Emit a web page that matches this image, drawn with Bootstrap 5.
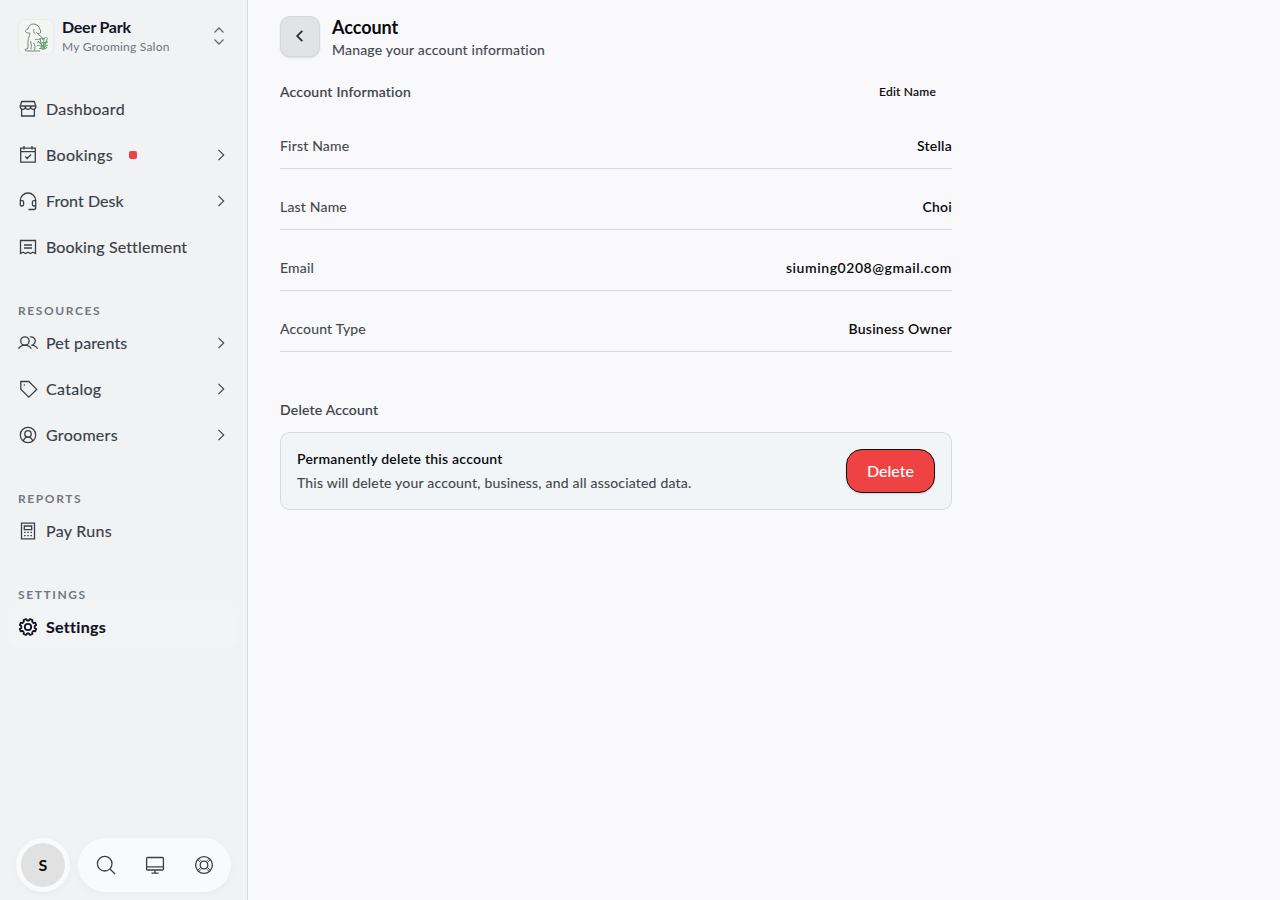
<!DOCTYPE html>
<html lang="en">
<head>
<meta charset="utf-8">
<meta name="viewport" content="width=device-width, initial-scale=1">
<title>Account</title>
<link href="https://cdn.jsdelivr.net/npm/bootstrap@5.3.0/dist/css/bootstrap.min.css" rel="stylesheet">
<style>
  body { font-family: Lato, "Open Sans", sans-serif; font-size: 14px; line-height: 20px; background: #f9f9fc; color: #090a0c; letter-spacing: .18px; }
  svg { fill: none; stroke: currentColor; stroke-width: 1.3; flex: none; display: block; }
  .sidebar { width: 248px; background: #f0f2f4; border-right: 1px solid #d6d8dc; padding: 16px 8px 8px; }
  .salon { padding: 0 10px; height: 41px; }
  .salon-logo { width: 36px; height: 36px; border-radius: 6px; background: #f3f6f3; border: 1px solid #e9ecea; color: #71877a; }
  .salon-logo svg { stroke-width: 1; }
  .salon-text { margin-top: -3px; }
  .salon-name { font-size: 16px; font-weight: 700; color: #10152a; letter-spacing: -.25px; line-height: 22px; }
  .salon-kind { font-size: 12px; color: #70757e; line-height: 16px; margin-top: 1px; letter-spacing: .22px; }
  .switcher { color: #666b73; margin-top: -2px; }
  .menu { margin-top: 32px; gap: 6px; }
  .menu-link { height: 40px; padding: 0 9px 0 10px; gap: 8px; font-size: 16px; line-height: 24px; color: #3a3f47; text-decoration: none; letter-spacing: .3px; border-radius: 8px; -webkit-text-stroke: .15px; }
  .menu-link.current { background: #f2f4f6; color: #10131f; font-weight: 700; letter-spacing: .3px; }
  .menu-link.current svg { stroke-width: 1.8; }
  .chevron { stroke-width: 1.1; margin-right: 1px; }
  .menu-title { height: 16px; line-height: 17px; margin: 29px 10px -1px; font-size: 12px; font-weight: 700; letter-spacing: 1.6px; color: #737881; }
  .ls-narrow { letter-spacing: .05px; }
  .ls-mid { letter-spacing: .15px; }
  .alert-dot { width: 8px; height: 8px; border-radius: 2px; background: #eb4448; margin-left: 8px; }
  .dock { gap: 8px; padding: 0 8px; }
  .avatar-ring { width: 54px; height: 54px; background: #f9fafb; box-shadow: 0 2px 8px rgba(0,0,0,.035); }
  .avatar-face { width: 44px; height: 44px; background: #e1e1e2; font-size: 16px; font-weight: 700; color: #08090b; }
  .dock-tools { width: 153px; height: 54px; padding: 0 16px 0 17px; background: #f9fafc; color: #3a3f47; box-shadow: 0 2px 8px rgba(0,0,0,.035); }
  .page { padding: 16px 32px; }
  .page-body { width: 672px; }
  .page-head { height: 60px; }
  .back { width: 40px; height: 41px; padding: 0 0 2px; border-radius: 10px; border: 1px solid #d5d8db; background: #e1e4e7; box-shadow: 0 1px 2px rgba(0,0,0,.12); }
  .page-title { font-size: 18px; line-height: 22px; font-weight: 700; letter-spacing: -.05px; margin: 0 0 2px; }
  .soft { color: #42464d; -webkit-text-stroke: .12px; letter-spacing: .2px; }
  .heading { font-size: 14px; line-height: 20px; font-weight: 500; color: #3f434a; letter-spacing: .22px; margin: 0; -webkit-text-stroke: .15px; }
  .edit { height: 32px; padding: 0 16px; border: 0; font-size: 12px; font-weight: 500; letter-spacing: .22px; color: #090a0c; -webkit-text-stroke: .15px; }
  .field { padding: 28px 0 12px; border-bottom: 1px solid #d8d9dc; }
  .field dd, .field dt { margin: 0; }
  .field dt { font-weight: 400; }
  .field dd, .strong { font-weight: 600; letter-spacing: .23px; }
  .field .mail { letter-spacing: .56px; }
  .danger-box { margin-top: 12px; height: 78px; padding: 0 16px; border: 1px solid #d7dadd; border-radius: 10px; background: #f2f5f7; }
  .delete { width: 89px; height: 44px; padding: 0; border: 1px solid #101112; border-radius: 16px; background: #ef4343; color: #fff; font-size: 16px; font-weight: 500; box-shadow: 0 1px 2px rgba(0,0,0,.15); }
  .delete:hover { background: #e23a3a; color: #fff; }
</style>
</head>
<body>
<div class="d-flex vh-100 overflow-hidden">
  <aside class="sidebar d-flex flex-column flex-shrink-0">
    <div class="salon d-flex align-items-center">
      <div class="salon-logo d-flex align-items-center justify-content-center">
        <svg width="28" height="30" viewBox="0 0 28 30">
          <path d="M3.500 9.500c-.3-1.500 1-2 2.500-2.500C6.500 3.500 9 2 11.500 2c3.500 0 5.800 2.500 6.200 5 .8 1.500 1.600 2.500.6 4-1 1.300-3.300.8-4.300-.8M3.500 9.500c.8 1.500 2.500 1.700 4.300 1.500.3 2.500-1.500 4.500-1.800 7.500-.2 3.500.5 5.500-.5 8.500H3.500c-1.200 1.500.5 2 2.500 2h12M12 7c-1 2 0 4 1.500 5M16 12.500c3 1.500 4.500 3 5 5.500M8.500 19c1 3 .8 5.500.5 8.500M11.500 21c1.500 2 2 4.500 1 7"/>
          <path stroke="#5f9a71" d="M13 18c2-2 3 1 5-1s3 1 5-1 2 1 3 1M15 21c2-2 3 1 5 0s3 0 6-1M15 24c2-2 3 1 5 0s3 1 6-1M17 27c2-2 3 1 5 0s2 0 3-2M18 16l2 11M22 16l-1 12M25 17l-3 10M16 19l8 8M25 19l-7 8"/>
        </svg>
      </div>
      <div class="salon-text ms-2 me-auto">
        <div class="salon-name">Deer Park</div>
        <div class="salon-kind">My Grooming Salon</div>
      </div>
      <svg class="switcher" width="20" height="20" viewBox="0 0 20 20"><path d="M5.500 6.500 10 2l4.500 4.500M5.500 13.500 10 18l4.500-4.500"/></svg>
    </div>

    <nav class="menu d-flex flex-column">
      <a class="menu-link d-flex align-items-center" href="#">
        <svg width="20" height="20" viewBox="0 0 20 20"><path d="M3.700 2.500h12.600l1.500 4.500v.8a2.600 2.500 0 0 1-5.200 0 2.600 2.500 0 0 1-5.200 0 2.600 2.500 0 0 1-5.200 0V7zM2.200 7h15.600M3.600 10.200v6.800h12.800v-6.800"/></svg>
        <span>Dashboard</span></a>
      <a class="menu-link d-flex align-items-center" href="#">
        <svg width="20" height="20" viewBox="0 0 20 20"><path d="M2.700 3.200h14.600v14H2.700zM2.700 6.700h14.600M6 1v3.500M14 1v3.500M7.200 11.500l2 2 3.800-4"/></svg>
        <span>Bookings</span><i class="alert-dot"></i>
        <svg class="chevron ms-auto" width="16" height="16" viewBox="0 0 16 16"><path d="m5.500 2.800 5.200 5.200-5.200 5.200"/></svg></a>
      <a class="menu-link d-flex align-items-center" href="#">
        <svg width="20" height="20" viewBox="0 0 20 20"><path d="M2.300 14V9.500a7.700 7.500 0 0 1 15.400 0v7a2 2 0 0 1-2 2H10.500M2.300 9.700h1.900a1.400 1.400 0 0 1 1.400 1.400v2.500A1.400 1.400 0 0 1 4.200 15H3.300a1 1 0 0 1-1-1M17.700 9.700h-1.900a1.400 1.400 0 0 0-1.400 1.400v2.500a1.400 1.400 0 0 0 1.400 1.400h1.900"/></svg>
        <span class="ls-narrow">Front Desk</span>
        <svg class="chevron ms-auto" width="16" height="16" viewBox="0 0 16 16"><path d="m5.500 2.800 5.200 5.200-5.200 5.200"/></svg></a>
      <a class="menu-link d-flex align-items-center" href="#">
        <svg width="20" height="20" viewBox="0 0 20 20"><path d="M2.500 3.500h15v13l-2.500-1.300-2.500 1.300-2.500-1.300-2.500 1.300L5 15.200l-2.500 1.300zM6 8h8M6 11h8"/></svg>
        <span class="ls-mid">Booking Settlement</span></a>

      <div class="menu-title">RESOURCES</div>
      <a class="menu-link d-flex align-items-center" href="#">
        <svg width="20" height="20" viewBox="0 0 20 20"><circle cx="6.900" cy="8" r="4.200"/><path d="M.5 15.700c1.500-2.300 3.700-3.500 6.400-3.500s4.900 1.200 6.400 3.500M11.800 4a4.200 4.200 0 1 1 1.500 8.200c2.700 0 4.800 1.200 6.300 3.500"/></svg>
        <span class="ls-mid">Pet parents</span>
        <svg class="chevron ms-auto" width="16" height="16" viewBox="0 0 16 16"><path d="m5.500 2.800 5.200 5.200-5.200 5.200"/></svg></a>
      <a class="menu-link d-flex align-items-center" href="#">
        <svg width="20" height="20" viewBox="0 0 20 20"><path d="M2.800 2.500h8l7.900 7.900-7.900 7.700-8-7.800z"/><circle cx="6.300" cy="6" r=".8" fill="currentColor" stroke="none"/></svg>
        <span>Catalog</span>
        <svg class="chevron ms-auto" width="16" height="16" viewBox="0 0 16 16"><path d="m5.500 2.800 5.200 5.200-5.200 5.200"/></svg></a>
      <a class="menu-link d-flex align-items-center" href="#">
        <svg width="20" height="20" viewBox="0 0 20 20"><circle cx="10" cy="10" r="7.700"/><circle cx="10" cy="8.900" r="3.200"/><path d="M5.200 15.900c1-2.400 2.600-3.800 4.800-3.800s3.800 1.400 4.800 3.800"/></svg>
        <span>Groomers</span>
        <svg class="chevron ms-auto" width="16" height="16" viewBox="0 0 16 16"><path d="m5.500 2.800 5.200 5.200-5.200 5.200"/></svg></a>

      <div class="menu-title">REPORTS</div>
      <a class="menu-link d-flex align-items-center" href="#">
        <svg width="20" height="20" viewBox="0 0 20 20"><path d="M3.500 2.200h13v15.600h-13zM6.300 5h7.400v3.700H6.300z"/><path stroke-dasharray="1.500 1.700" d="M6.100 11.400h8M6.100 14.600h8"/></svg>
        <span>Pay Runs</span></a>

      <div class="menu-title">SETTINGS</div>
      <a class="menu-link current d-flex align-items-center" href="#" aria-current="page">
        <svg width="20" height="20" viewBox="0 0 20 20" stroke-linejoin="round"><circle cx="10" cy="10" r="3.200"/><path d="M9.040 3.500h1.920L12 2l2.490 1-.34 1.700 1.350 1.350 1.700-.34 1 2.290-1.500 1.040v1.920l1.500 1.040-1 2.300-1.700-.35-1.350 1.350.34 1.700-2.490 1-1.040-1.500H9.040L8 18l-2.490-1 .34-1.700L4.500 13.950l-1.700.35-1-2.300 1.500-1.040V9.040L1.800 8l1-2.290 1.700.34L5.850 4.700 5.510 3 8 2z"/></svg>
        <span>Settings</span></a>
    </nav>

    <div class="dock d-flex mt-auto">
      <div class="avatar-ring rounded-circle d-flex align-items-center justify-content-center">
        <div class="avatar-face rounded-circle d-flex align-items-center justify-content-center">S</div>
      </div>
      <div class="dock-tools rounded-pill d-flex align-items-center justify-content-between">
        <svg width="22" height="22" viewBox="0 0 22 22"><circle cx="9.700" cy="9.700" r="7.300"/><path d="m15 15 5 5"/></svg>
        <svg width="22" height="22" viewBox="0 0 22 22"><rect x="2.600" y="3.500" width="16.800" height="12.500" rx="1"/><path d="M2.600 12.800h16.800M11 16v3M7.500 19.200h7"/></svg>
        <svg width="22" height="22" viewBox="0 0 22 22"><circle cx="11" cy="11" r="8.400"/><circle cx="11" cy="11" r="3.800"/><path d="m4.600 5.600 3.300 3.300M17.400 5.600l-3.300 3.300M4.600 16.400l3.300-3.300M17.400 16.400l-3.300-3.300M6 4.600l2.800 2.800M16 4.600l-2.800 2.800M6 17.400l2.800-2.800M16 17.400l-2.800-2.800" style="stroke-width:.8"/></svg>
      </div>
    </div>
  </aside>

  <main class="page flex-grow-1">
    <div class="page-body">
      <header class="page-head d-flex align-items-start">
        <button class="back btn d-flex align-items-center justify-content-center" type="button" aria-label="Back">
          <svg width="16" height="16" viewBox="0 0 16 16" style="stroke-width:1.700"><path d="M10.300 2.800 5.200 8l5.100 5.200"/></svg>
        </button>
        <div class="ms-2 ps-1">
          <h1 class="page-title">Account</h1>
          <div class="soft">Manage your account information</div>
        </div>
      </header>

      <section>
        <div class="d-flex align-items-center justify-content-between">
          <h2 class="heading">Account Information</h2>
          <button class="edit btn" type="button">Edit Name</button>
        </div>
        <dl class="m-0">
          <div class="field d-flex justify-content-between"><dt class="soft ls-narrow">First Name</dt><dd>Stella</dd></div>
          <div class="field d-flex justify-content-between"><dt class="soft">Last Name</dt><dd>Choi</dd></div>
          <div class="field d-flex justify-content-between"><dt class="soft">Email</dt><dd class="mail">siuming0208@gmail.com</dd></div>
          <div class="field d-flex justify-content-between"><dt class="soft">Account Type</dt><dd class="ls-mid">Business Owner</dd></div>
        </dl>
      </section>

      <section class="pt-5">
        <h2 class="heading ls-mid">Delete Account</h2>
        <div class="danger-box d-flex align-items-center justify-content-between">
          <div>
            <div class="strong">Permanently delete this account</div>
            <div class="soft pt-1">This will delete your account, business, and all associated data.</div>
          </div>
          <button class="delete btn" type="button">Delete</button>
        </div>
      </section>
    </div>
  </main>
</div>
<script src="https://cdn.jsdelivr.net/npm/bootstrap@5.3.0/dist/js/bootstrap.bundle.min.js"></script>
</body>
</html>
